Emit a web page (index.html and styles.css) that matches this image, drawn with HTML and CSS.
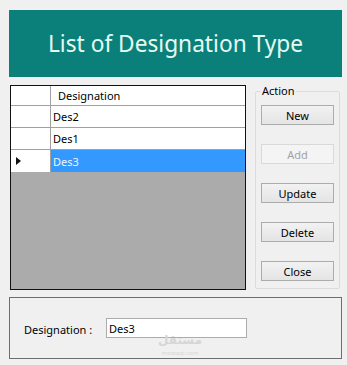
FILE: index.html
```html
<!DOCTYPE html>
<html>
<head>
<meta charset="utf-8">
<link rel="stylesheet" href="styles.css">
</head>
<body>
<div class="app">
  <div class="title">List of Designation Type</div>
  <div class="main">
    <div class="grid">
      <div class="row head">
        <div class="rh"></div>
        <div class="cell">Designation</div>
      </div>
      <div class="row">
        <div class="rh"></div>
        <div class="cell data">Des2</div>
      </div>
      <div class="row">
        <div class="rh"></div>
        <div class="cell data">Des1</div>
      </div>
      <div class="row sel">
        <div class="rh"><span class="arrow"></span></div>
        <div class="cell data">Des3</div>
      </div>
    </div>
    <fieldset class="actions">
      <legend>Action</legend>
      <button class="btn">New</button>
      <button class="btn" disabled>Add</button>
      <button class="btn">Update</button>
      <button class="btn">Delete</button>
      <button class="btn">Close</button>
    </fieldset>
  </div>
  <div class="detail">
    <span class="lbl">Designation :</span>
    <div class="input">Des3</div>
    <div class="wm"><span class="wm-ar">مستقل</span><span class="wm-en">mostaql.com</span></div>
  </div>
</div>
</body>
</html>
```

FILE: styles.css
```css
* { box-sizing: border-box; }
html, body { margin: 0; padding: 0; }
body {
  background: #f0f0f0;
  font-family: "Noto Sans", "DejaVu Sans", sans-serif;
  font-size: 11px;
  color: #000;
  width: 347px;
  height: 365px;
  overflow: hidden;
}
.app {
  padding: 10px 0 0 9px;
}
.title {
  width: 333px;
  height: 67px;
  background: #0b807a;
  color: #e4fbf3;
  font-size: 22.7px;
  display: flex;
  align-items: center;
  justify-content: center;
  padding-bottom: 1px;
}
.main {
  display: flex;
  margin-top: 8px;
  align-items: flex-start;
}
.grid {
  margin-left: 1px;
  width: 236px;
  height: 205px;
  border: 1px solid #111;
  background: #ababab;
  display: flex;
  flex-direction: column;
}
.row {
  display: flex;
  height: 22px;
  background: #fff;
}
.row.head { height: 20px; }
.rh {
  width: 40px;
  border-right: 1px solid #a0a0a0;
  border-bottom: 1px solid #a0a0a0;
  background: #fff;
  display: flex;
  align-items: center;
  padding-left: 5px;
}
.cell {
  flex: 1;
  border-bottom: 1px solid #a0a0a0;
  display: flex;
  align-items: center;
  padding-left: 7px;
  line-height: 1;
}
.cell.data { padding-left: 2px; }
.row.sel .cell {
  background: #3399ff;
  color: #eef6ff;
  border-bottom: none;
}
.row.sel .rh { border-bottom: none; }
.arrow {
  width: 0;
  height: 0;
  border-top: 4px solid transparent;
  border-bottom: 4px solid transparent;
  border-left: 5px solid #111;
}
.actions {
  margin: -2px 0 0 9px;
  width: 85px;
  height: 206px;
  padding: 6px 5px 0 5px;
  border: 1px solid #dcdcdc;
  border-radius: 2px;
  display: flex;
  flex-direction: column;
  gap: 19px;
}
.actions legend {
  padding: 0 1px;
  margin-left: 0;
  line-height: 16px;
  font-size: 11px;
}
.btn {
  width: 73px;
  height: 20px;
  margin: 0;
  padding: 0;
  border: 1px solid #acacac;
  background: linear-gradient(#f2f2f2, #e4e4e4);
  font-family: inherit;
  font-size: 11px;
  color: #000;
  border-radius: 0;
}
.btn:disabled {
  border-color: #d9d9d9;
  background: #f4f4f4;
  color: #a3a3a3;
}
.detail {
  position: relative;
  margin-top: 7px;
  width: 333px;
  height: 62px;
  border: 1px solid #6e6e6e;
  display: flex;
  align-items: center;
  padding: 0 0 0 14px;
}
.lbl {
  width: 82px;
  padding-top: 2px;
}
.input {
  width: 141px;
  height: 20px;
  border: 1px solid #acacac;
  background: #fff;
  padding-left: 2px;
  display: flex;
  align-items: center;
}
.wm {
  position: absolute;
  left: 140px;
  top: 35px;
  width: 60px;
  display: flex;
  flex-direction: column;
  align-items: center;
  color: #d6d6d6;
}
.wm-ar { font-size: 12px; font-weight: bold; line-height: 14px; height: 14px; }
.wm-en { font-size: 6px; line-height: 7px; margin-top: 3px; }
```
